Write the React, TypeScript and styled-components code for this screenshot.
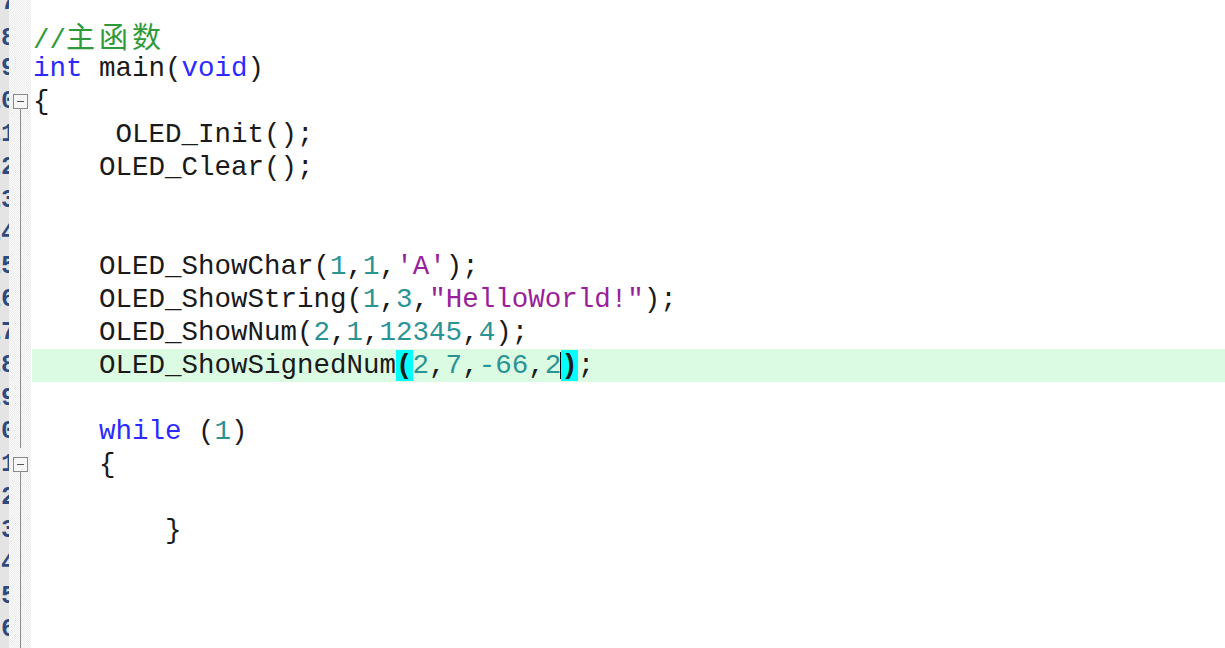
import React from "react";
import styled, { createGlobalStyle } from "styled-components";

const Global = createGlobalStyle`
  html, body { margin: 0; padding: 0; background: #ffffff; overflow: hidden; }
  #root { width: 1225px; height: 648px; overflow: hidden; }
`;

type Kind = "plain" | "kw" | "num" | "str" | "cm" | "match";
type Tok = { t: string; k?: Kind; caret?: boolean };
type Line = { n: number; toks: Tok[]; fold?: "box" | "line" | "none"; active?: boolean };

const Editor = styled.div`
  display: flex;
  flex-direction: column;
  margin-top: -14px;
  width: 1225px;
`;

const Row = styled.div`
  display: grid;
  grid-template-columns: 9px 22px 1fr;
  height: 33px;
`;

const LineNo = styled.div`
  background: #e4e4e4;
  overflow: hidden;
  display: flex;
  justify-content: flex-end;
  align-items: center;
  font-family: "Liberation Mono", monospace;
  font-size: 25px;
  font-weight: bold;
  color: #2d4a80;
  white-space: pre;
`;

const LineNoText = styled.span`
  margin-right: -7px;
`;

const Fold = styled.div<{ $mode: "box" | "line" | "none" }>`
  position: relative;
  background: repeating-conic-gradient(#ececec 0 25%, #fbfbfb 0 50%) 0 0 / 2px 2px;
  &::before {
    content: "";
    display: ${(p) => (p.$mode === "none" ? "none" : "block")};
    position: absolute;
    left: 11px;
    width: 1px;
    top: ${(p) => (p.$mode === "box" ? "17px" : "0")};
    bottom: 0;
    background: #8c8c8c;
  }
`;

const FoldBox = styled.div`
  position: absolute;
  left: 4px;
  top: 9px;
  width: 13px;
  height: 13px;
  border: 1px solid #8a8a8a;
  background: #f6f6f6;
  &::after {
    content: "";
    position: absolute;
    left: 3px;
    right: 3px;
    top: 6px;
    height: 1px;
    background: #555;
  }
`;

const Code = styled.div<{ $active?: boolean }>`
  background: ${(p) => (p.$active ? "#dcfbe3" : "#ffffff")};
  margin-left: 1px;
  padding-left: 1px;
  font-family: "Liberation Mono", "Noto Sans CJK SC", monospace;
  font-size: 27.5px;
  line-height: 33px;
  white-space: pre;
  color: #1a1a1a;
`;

const colors: Record<Kind, string> = {
  plain: "#1a1a1a",
  kw: "#2b2bff",
  num: "#2a9494",
  str: "#9a1f9a",
  cm: "#2f9a3a",
  match: "#1a1a1a",
};

const Tk = styled.span<{ $k: Kind }>`
  color: ${(p) => colors[p.$k]};
  ${(p) => (p.$k === "match" ? "background: #00ffff; font-weight: bold;" : "")}
  position: relative;
`;

const Cjk = styled.span`
  font-family: "Noto Sans CJK SC", sans-serif;
  font-size: 29px;
  letter-spacing: 4px;
`;

const Caret = styled.span`
  position: absolute;
  left: -1px;
  top: 2px;
  bottom: 2px;
  width: 1px;
  background: #000;
`;

const lines: Line[] = [
  { n: 7, toks: [] },
  { n: 8, toks: [{ t: "//", k: "cm" }, { t: "主函数", k: "cm" }] },
  { n: 9, toks: [{ t: "int", k: "kw" }, { t: " main(" }, { t: "void", k: "kw" }, { t: ")" }] },
  { n: 10, toks: [{ t: "{" }], fold: "box" },
  { n: 11, toks: [{ t: "     OLED_Init();" }], fold: "line" },
  { n: 12, toks: [{ t: "    OLED_Clear();" }], fold: "line" },
  { n: 13, toks: [], fold: "line" },
  { n: 14, toks: [], fold: "line" },
  {
    n: 15,
    fold: "line",
    toks: [
      { t: "    OLED_ShowChar(" },
      { t: "1", k: "num" },
      { t: "," },
      { t: "1", k: "num" },
      { t: "," },
      { t: "'A'", k: "str" },
      { t: ");" },
    ],
  },
  {
    n: 16,
    fold: "line",
    toks: [
      { t: "    OLED_ShowString(" },
      { t: "1", k: "num" },
      { t: "," },
      { t: "3", k: "num" },
      { t: "," },
      { t: "\"HelloWorld!\"", k: "str" },
      { t: ");" },
    ],
  },
  {
    n: 17,
    fold: "line",
    toks: [
      { t: "    OLED_ShowNum(" },
      { t: "2", k: "num" },
      { t: "," },
      { t: "1", k: "num" },
      { t: "," },
      { t: "12345", k: "num" },
      { t: "," },
      { t: "4", k: "num" },
      { t: ");" },
    ],
  },
  {
    n: 18,
    fold: "line",
    active: true,
    toks: [
      { t: "    OLED_ShowSignedNum" },
      { t: "(", k: "match" },
      { t: "2", k: "num" },
      { t: "," },
      { t: "7", k: "num" },
      { t: "," },
      { t: "-66", k: "num" },
      { t: "," },
      { t: "2", k: "num" },
      { t: ")", k: "match", caret: true },
      { t: ";" },
    ],
  },
  { n: 19, toks: [], fold: "line" },
  { n: 20, toks: [{ t: "    " }, { t: "while", k: "kw" }, { t: " (" }, { t: "1", k: "num" }, { t: ")" }], fold: "line" },
  { n: 21, toks: [{ t: "    {" }], fold: "box" },
  { n: 22, toks: [], fold: "line" },
  { n: 23, toks: [{ t: "        }" }], fold: "line" },
  { n: 24, toks: [], fold: "line" },
  { n: 25, toks: [], fold: "line" },
  { n: 26, toks: [], fold: "line" },
  { n: 27, toks: [], fold: "line" },
];

const isCjk = (s: string) => /[\u4e00-\u9fff]/.test(s);

export default function App() {
  return (
    <>
      <Global />
      <Editor>
        {lines.map((ln) => {
          const mode = ln.fold ?? "none";
          return (
            <Row key={ln.n}>
              <LineNo>
                <LineNoText>{ln.n}</LineNoText>
              </LineNo>
              <Fold $mode={mode}>{mode === "box" && <FoldBox />}</Fold>
              <Code $active={ln.active}>
                {ln.toks.map((tk, i) => (
                  <Tk key={i} $k={tk.k ?? "plain"}>
                    {tk.caret && <Caret />}
                    {isCjk(tk.t) ? <Cjk>{tk.t}</Cjk> : tk.t}
                  </Tk>
                ))}
                {ln.toks.length === 0 ? " " : null}
              </Code>
            </Row>
          );
        })}
      </Editor>
    </>
  );
}
